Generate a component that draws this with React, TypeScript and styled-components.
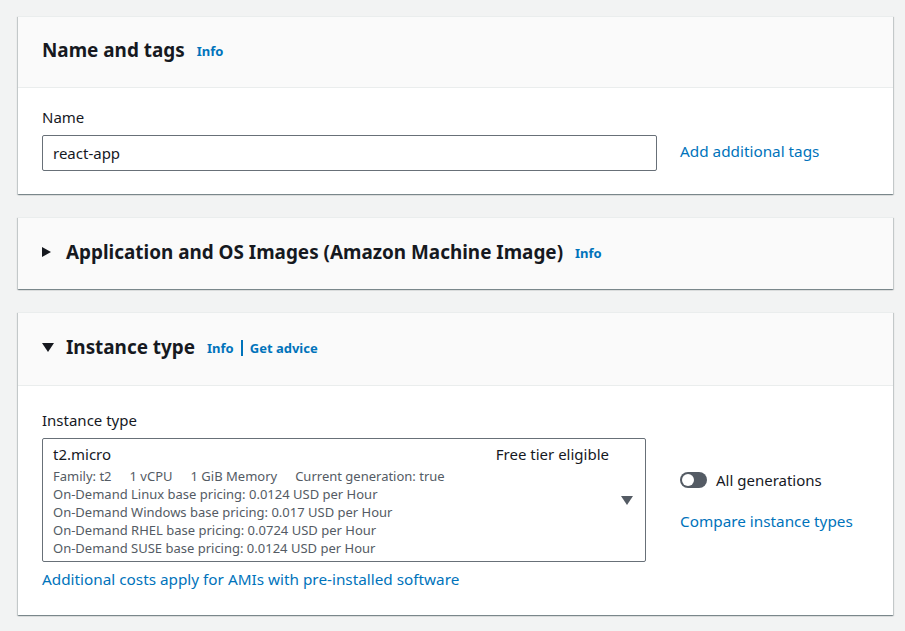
import React from "react";
import styled, { createGlobalStyle } from "styled-components";

const Global = createGlobalStyle`
  html, body { margin: 0; padding: 0; background: #f2f3f3; }
  body { font-family: "Noto Sans", "Open Sans", Arial, sans-serif; color: #16191f; }
  * { box-sizing: border-box; }
`;

const Page = styled.div`
  display: flex;
  flex-direction: column;
  gap: 23px;
  padding: 16px 12px 14px 18px;
`;

const Card = styled.section`
  background: #fff;
  box-shadow: 0 1px 1px 0 rgba(0, 28, 36, 0.3), 1px 1px 1px 0 rgba(0, 28, 36, 0.15),
    -1px 1px 1px 0 rgba(0, 28, 36, 0.15);
  border-top: 1px solid #eaeded;
`;

const Header = styled.div<{ $bordered?: boolean; $h: number }>`
  display: flex;
  align-items: center;
  height: ${(p) => p.$h}px;
  padding: 0 24px 4px 24px;
  background: #fafafa;
  border-bottom: ${(p) => (p.$bordered ? "1px solid #eaeded" : "none")};
`;

const Caret = styled.svg`
  flex: none;
  margin-right: 12px;
  fill: #16191f;
`;

const Title = styled.h2`
  margin: 0;
  font-size: 18.9px;
  line-height: 24px;
  font-weight: 700;
  color: #16191f;
`;

const HeaderLinks = styled.span`
  display: flex;
  align-items: center;
  margin-left: 12px;
  margin-top: 2px;
  font-size: 13px;
  font-weight: 700;
  color: #0073bb;
`;

const Sep = styled.span`
  display: inline-block;
  width: 2px;
  height: 16px;
  margin: 0 7px;
  background: #0073bb;
`;

const Body = styled.div<{ $pt: number; $pb: number }>`
  padding: ${(p) => p.$pt}px 24px ${(p) => p.$pb}px 24px;
`;

const FieldGrid = styled.div<{ $w: number; $gap: number }>`
  display: grid;
  grid-template-columns: ${(p) => p.$w}px auto;
  column-gap: ${(p) => p.$gap}px;
  align-items: center;
`;

const Label = styled.div`
  grid-column: 1;
  font-size: 15px;
  line-height: 20px;
  margin-bottom: 8px;
`;

const Input = styled.div`
  grid-column: 1;
  height: 36px;
  display: flex;
  align-items: center;
  padding: 0 10px;
  border: 1px solid #687078;
  border-radius: 2px;
  font-size: 15px;
`;

const Link = styled.a`
  color: #0073bb;
  font-size: 15.3px;
  line-height: 20px;
  text-decoration: none;
`;

const Aside = styled.div<{ $lift?: number }>`
  grid-column: 2;
  display: flex;
  flex-direction: column;
  gap: 21px;
  margin-bottom: ${(p) => p.$lift ?? 0}px;
`;

const Select = styled.div`
  grid-column: 1;
  position: relative;
  height: 124px;
  border: 1px solid #687078;
  border-radius: 2px;
  padding: 5px 36px 4px 10px;
`;

const SelectTop = styled.div`
  display: flex;
  justify-content: space-between;
  font-size: 15px;
  line-height: 20px;
  margin-bottom: 3px;
`;

const Detail = styled.div`
  font-size: 13px;
  line-height: 18px;
  color: #545b64;
  white-space: nowrap;
`;

const Spec = styled.span`
  margin-right: 18px;
`;

const DropCaret = styled.svg`
  position: absolute;
  right: 12px;
  top: 57px;
  fill: #545b64;
`;

const Footnote = styled.div`
  grid-column: 1;
  grid-column-end: span 2;
  margin-top: 6px;
`;

const ToggleRow = styled.div`
  display: flex;
  align-items: center;
  gap: 9px;
  font-size: 15px;
  line-height: 20px;
`;

const Track = styled.span`
  position: relative;
  width: 27px;
  height: 16px;
  border-radius: 8px;
  background: #545b64;
`;

const Knob = styled.span`
  position: absolute;
  left: 2px;
  top: 2px;
  width: 12px;
  height: 12px;
  border-radius: 50%;
  background: #fff;
`;

export default function App() {
  return (
    <>
      <Global />
      <Page>
        <Card>
          <Header $bordered $h={71}>
            <Title>Name and tags</Title>
            <HeaderLinks>Info</HeaderLinks>
          </Header>
          <Body $pt={19} $pb={23}>
            <FieldGrid $w={615} $gap={23}>
              <Label>Name</Label>
              <Input>react-app</Input>
              <Aside $lift={5}>
                <Link href="#">Add additional tags</Link>
              </Aside>
            </FieldGrid>
          </Body>
        </Card>

        <Card>
          <Header $h={71}>
            <Caret width="12" height="12" viewBox="0 0 12 12">
              <path d="M0 1 L9 6 L0 11 Z" />
            </Caret>
            <Title>Application and OS Images (Amazon Machine Image)</Title>
            <HeaderLinks>Info</HeaderLinks>
          </Header>
        </Card>

        <Card>
          <Header $bordered $h={73}>
            <Caret width="12" height="9" viewBox="0 0 12 9">
              <path d="M0 0 L12 0 L6 9 Z" />
            </Caret>
            <Title>Instance type</Title>
            <HeaderLinks>
              Info
              <Sep />
              Get advice
            </HeaderLinks>
          </Header>
          <Body $pt={24} $pb={25}>
            <FieldGrid $w={604} $gap={34}>
              <Label>Instance type</Label>
              <Select>
                <SelectTop>
                  <span>t2.micro</span>
                  <span>Free tier eligible</span>
                </SelectTop>
                <Detail>
                  <Spec>Family: t2</Spec>
                  <Spec>1 vCPU</Spec>
                  <Spec>1 GiB Memory</Spec>
                  <span>Current generation: true</span>
                </Detail>
                <Detail>On-Demand Linux base pricing: 0.0124 USD per Hour</Detail>
                <Detail>On-Demand Windows base pricing: 0.017 USD per Hour</Detail>
                <Detail>On-Demand RHEL base pricing: 0.0724 USD per Hour</Detail>
                <Detail>On-Demand SUSE base pricing: 0.0124 USD per Hour</Detail>
                <DropCaret width="12" height="9" viewBox="0 0 12 9">
                  <path d="M0 0 L12 0 L6 9 Z" />
                </DropCaret>
              </Select>
              <Aside>
                <ToggleRow>
                  <Track>
                    <Knob />
                  </Track>
                  All generations
                </ToggleRow>
                <Link href="#">Compare instance types</Link>
              </Aside>
              <Footnote>
                <Link href="#">Additional costs apply for AMIs with pre-installed software</Link>
              </Footnote>
            </FieldGrid>
          </Body>
        </Card>
      </Page>
    </>
  );
}
